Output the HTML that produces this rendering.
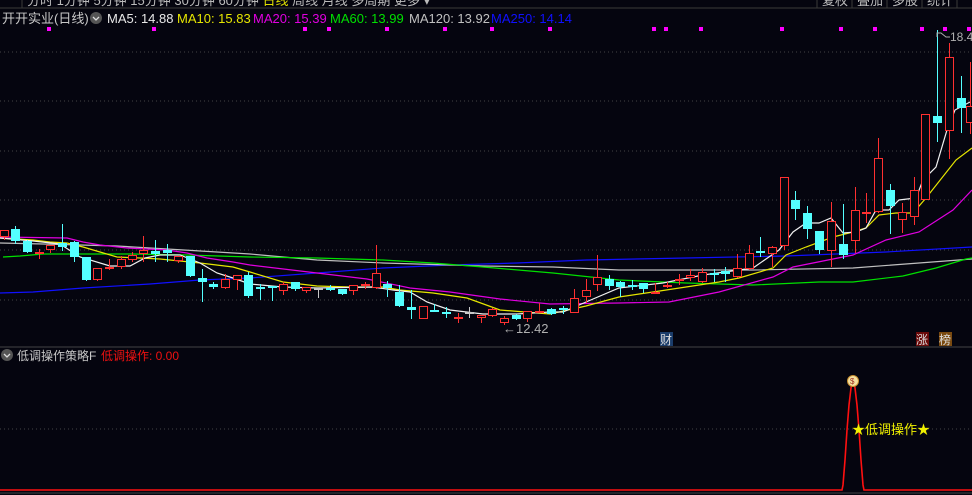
<!DOCTYPE html>
<html><head><meta charset="utf-8">
<style>
html,body{margin:0;padding:0;background:#05050f;width:972px;height:495px;overflow:hidden;font-family:"Liberation Sans","Noto Sans CJK SC",sans-serif;}
svg{position:absolute;left:0;top:0}
</style></head>
<body>
<svg id="s" width="972" height="495" viewBox="0 0 972 495" xmlns="http://www.w3.org/2000/svg">
<rect width="972" height="495" fill="#05050f"/>
<line x1="0" y1="8" x2="972" y2="8" stroke="#3a3a3a"/>
<line x1="22" y1="0" x2="22" y2="8" stroke="#3a3a3a"/>
<text x="27" y="5" font-size="13" fill="#bbb">分时  1分钟  5分钟  15分钟  30分钟  60分钟  <tspan fill="#e0e000">日线</tspan>  周线  月线  多周期  更多 ▾</text>
<line x1="817" y1="0" x2="817" y2="8" stroke="#3a3a3a"/>
<line x1="852" y1="0" x2="852" y2="8" stroke="#3a3a3a"/>
<line x1="887" y1="0" x2="887" y2="8" stroke="#3a3a3a"/>
<line x1="922" y1="0" x2="922" y2="8" stroke="#3a3a3a"/>
<line x1="957" y1="0" x2="957" y2="8" stroke="#3a3a3a"/>
<text x="822" y="5" font-size="13" fill="#bbb">复权</text>
<text x="857" y="5" font-size="13" fill="#bbb">叠加</text>
<text x="892" y="5" font-size="13" fill="#bbb">多股</text>
<text x="927" y="5" font-size="13" fill="#bbb">统计</text>
<text x="2" y="23" font-size="13" fill="#c8c8c8">开开实业(日线)</text>
<circle cx="96" cy="18" r="6" fill="#555"/>
<path d="M93 17 L96 20 L99 17" stroke="#ddd" stroke-width="1.3" fill="none"/>
<text y="23" font-size="13"><tspan x="107" fill="#e8e8e8">MA5: 14.88</tspan><tspan x="177" fill="#e6e600">MA10: 15.83</tspan><tspan x="253" fill="#e000e0">MA20: 15.39</tspan><tspan x="330" fill="#00e000">MA60: 13.99</tspan><tspan x="409" fill="#c0c0c0">MA120: 13.92</tspan><tspan x="491" fill="#1010ff">MA250: 14.14</tspan></text>
<g fill="#ff00ff" id="dots"></g>
<g stroke="#444" stroke-dasharray="1,3">
<line x1="0" y1="52" x2="972" y2="52"/><line x1="0" y1="101" x2="972" y2="101"/>
<line x1="0" y1="151" x2="972" y2="151"/><line x1="0" y1="200" x2="972" y2="200"/>
<line x1="0" y1="250" x2="972" y2="250"/><line x1="0" y1="300" x2="972" y2="300"/>
<line x1="0" y1="429" x2="972" y2="429"/>
</g>
<line x1="0" y1="347" x2="972" y2="347" stroke="#444"/>
<g fill="none" stroke-width="1.2">
<polyline stroke="#1010ff" points="0,293 33,292 83,288 150,284 200,280 250,278 317,273 383,268 450,265 517,263 586,260 686,258 786,256 886,252 972,247"/>
<polyline stroke="#c0c0c0" points="0,243 43,244 117,246 167,249 217,252 250,254 317,260 383,263 450,265 483,266 553,267 619,270 753,270 853,268 919,263 972,259"/>
<polyline stroke="#00e000" points="3,257 20,256 43,254 133,254 187,255 250,257 317,258 383,260 433,263 483,267 553,273 619,280 686,283 753,285 819,282 853,282 903,276 936,268 966,259 972,258"/>
<polyline stroke="#e000e0" points="0,237 67,238 83,242 100,245 127,248 167,250 187,253 207,258 233,262 250,265 317,273 367,279 410,288 450,292 500,299 550,304 619,303 669,302 719,292 773,277 793,267 853,255 886,240 919,232 953,210 972,190"/>
<polyline stroke="#e6e600" points="0,238 33,240 50,242 67,243 83,247 100,252 117,257 140,258 160,259 180,261 200,263 233,267 250,272 283,282 317,286 350,287 383,287 400,290 433,293 467,298 500,310 550,314 586,306 619,297 653,292 719,282 739,278 773,268 786,255 806,247 833,237 853,232 866,228 879,215 896,213 913,213 926,198 956,160 972,148"/>
<polyline stroke="#f0f0f0" points="0,238 33,241 60,244 80,257 110,266 130,266 145,258 160,255 180,255 200,263 217,273 233,278 250,284 283,287 317,288 373,287 393,290 410,292 427,302 450,310 483,314 517,314 550,312 563,312 586,302 619,288 663,283 703,275 739,270 753,268 779,250 793,232 806,223 819,223 831,218 843,233 856,232 866,228 876,210 889,210 899,200 916,198 923,180 936,167 947,130 955,110 970,102"/>
</g>
<g id="c"></g>
<path d="M937 37 L937 33 L941 33 L946 37 L950 37" stroke="#aaa" fill="none"/>
<text x="950" y="41" font-size="12" fill="#b0b0b0">18.4</text>
<text x="503" y="333" font-size="13" fill="#b0b0b0">←12.42</text>
<rect x="660" y="332" width="13" height="14" fill="#1a3c6a"/><text x="660" y="344" font-size="12" fill="#ddd">财</text>
<rect x="916" y="332" width="13" height="14" fill="#6a0a0a"/><text x="916" y="344" font-size="12" fill="#ddd">涨</text>
<rect x="939" y="332" width="13" height="14" fill="#7a4a10"/><text x="939" y="344" font-size="12" fill="#ddd">榜</text>
<circle cx="7" cy="355" r="6" fill="#555"/>
<path d="M4 354 L7 357 L10 354" stroke="#ddd" stroke-width="1.3" fill="none"/>
<text x="17" y="360" font-size="12" fill="#c8c8c8">低调操作策略F</text>
<text x="101" y="360" font-size="12" fill="#ee1111">低调操作: 0.00</text>
<polyline fill="none" stroke="#ff1010" stroke-width="1.6" points="0,490 842,490 843,485 845,460 847,430 849,405 851,388 853,378 855,388 857,405 859,430 861,460 863,485 864,490 972,490"/>
<circle cx="853" cy="381" r="5.5" fill="#f5e0a0" stroke="#c89030"/>
<text x="850" y="384" font-size="8" fill="#a03020">$</text>
<text x="852" y="434" font-size="13" fill="#f0f000">★低调操作★</text>
<line x1="0" y1="493" x2="972" y2="493" stroke="#444"/>
</svg>
<script>
var ns="http://www.w3.org/2000/svg";
function el(p,t,a){var e=document.createElementNS(ns,t);for(var k in a)e.setAttribute(k,a[k]);p.appendChild(e);return e;}
var d=document.getElementById("dots");
[49,154,305,329,387,445,492,550,654,666,701,782,841,875,922,945,969].forEach(function(x){el(d,"rect",{x:x-2,y:27,width:4,height:4});});
var C=[
[4,'R',230,237,230,240],[15,'C',229,241,226,244],[27,'C',241,252,240,253],[39,'R',252,254,249,259],[50,'R',245,250,245,253],
[62,'C',243,247,224,251],[74,'C',242,257,241,262],[86,'C',257,280,257,281],[97,'R',268,280,268,281],[109,'R',267,269,259,270],
[121,'R',259,267,256,269],[132,'R',255,260,252,262],[143,'R',250,254,236,262],[155,'C',251,254,240,262],[167,'C',250,253,244,262],
[178,'R',256,261,256,263],[190,'C',256,276,256,277],[202,'C',278,282,269,302],[213,'C',284,287,282,289],[225,'R',279,288,274,289],
[237,'R',275,280,275,290],[248,'C',275,296,272,298],[260,'C',287,288,284,300],[272,'C',286,288,286,301],[283,'R',284,291,282,295],
[295,'C',282,289,282,291],[306,'R',287,291,287,293],[318,'W',288,289,288,298],[330,'C',288,290,285,291],[342,'C',289,294,289,295],
[353,'R',285,291,285,295],[365,'R',284,286,282,289],[376,'R',273,288,245,289],[387,'C',284,288,281,297],[399,'C',292,306,285,307],
[411,'C',307,310,290,319],[423,'R',306,319,306,319],[434,'C',310,311,304,312],[446,'C',312,314,307,318],[458,'R',317,318,313,323],
[469,'W',312,313,307,318],[481,'R',315,318,315,323],[492,'R',309,316,308,317],[504,'R',318,323,316,325],[516,'C',315,319,314,320],
[527,'R',311,319,311,322],[539,'R',311,312,303,313],[551,'C',309,314,308,315],[563,'C',308,309,306,314],[574,'R',298,313,289,313],
[586,'R',290,297,279,303],[597,'R',277,285,255,291],[609,'C',279,286,275,290],[620,'C',282,287,281,297],[632,'C',285,286,280,290],
[643,'C',283,289,283,293],[655,'R',292,294,283,294],[667,'R',285,287,282,288],[679,'R',279,281,274,285],[690,'R',275,278,269,281],
[702,'R',272,282,268,283],[714,'C',273,275,269,282],[725,'C',271,274,267,282],[737,'R',268,277,254,278],[749,'R',253,269,245,270],
[760,'C',251,253,237,257],[772,'R',247,254,246,267],[784,'R',177,246,177,250],[795,'C',200,209,191,220],[807,'C',213,229,206,239],
[819,'C',231,250,231,254],[831,'R',221,251,202,267],[843,'C',244,255,204,259],[855,'R',210,241,187,253],[866,'R',212,213,193,223],
[878,'R',158,212,138,213],[890,'C',190,206,184,234],[902,'R',212,220,203,233],[914,'R',190,217,177,225],[925,'R',114,200,114,200],
[937,'C',116,123,30,142],[949,'R',57,131,43,159],[961,'C',98,108,76,133],[970,'R',106,123,62,134]];
var g=document.getElementById("c");
C.forEach(function(c){var x=c[0],col=c[1]=='R'?'#ff3030':c[1]=='C'?'#54ffff':'#c8c8c8';
el(g,"line",{x1:x+.5,y1:c[4],x2:x+.5,y2:c[5],stroke:col});
var h=c[3]-c[2];
if(h<=2){el(g,"rect",{x:x-4,y:c[2],width:9,height:2,fill:col});}
else if(c[1]=='R'){el(g,"rect",{x:x-3.5,y:c[2]+.5,width:8,height:h-1,fill:"#05050f",stroke:col});}
else{el(g,"rect",{x:x-4,y:c[2],width:9,height:h,fill:col});}
});
</script>
</body></html>
